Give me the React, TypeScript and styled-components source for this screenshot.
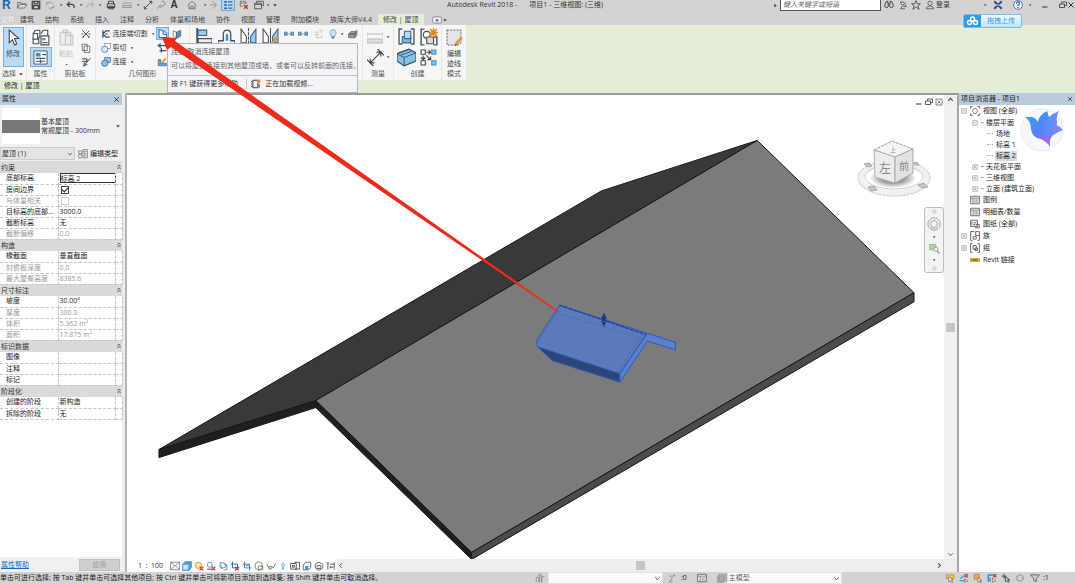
import React from "react";
import styled, { createGlobalStyle } from "styled-components";

const GlobalStyle = createGlobalStyle`
  * { box-sizing: border-box; }
  body {
    margin: 0;
    background: #d3d3d3;
    color: #333;
    font: 7px/10px "Open Sans", "Noto Sans CJK SC", sans-serif;
  }
  button, input, select {
    margin: 0;
    padding: 0;
    border: 0;
    background: none;
    color: inherit;
    font: inherit;
    border-radius: 0;
  }
  select { appearance: none; }
  svg { display: block; flex: none; }
`;

/* ---------- icons ---------- */

const blue = "#3f8fd0";
const ink = "#505050";
const pale = "#b9b9b9";

const glyphs: Record<string, React.ReactNode> = {
  folder: <path d="M1 13V4h5l1 2h6v2M1 13l3-6h12l-4 6z" stroke={ink} />,
  save: <path d="M2 2h12v12H2zM5 2v4h6V2M4 14V9h8v5" stroke="#444" strokeWidth="2" />,
  sync: <path d="M2 9a5 5 0 0 1 9-4l2 1M14 8a5 5 0 0 1-9 4M1 5h6M9 12h6" stroke="#8a8a8a" />,
  undo: <path d="M6 3L2 7l4 4M2 7h7q5 0 4 6" stroke="#444" strokeWidth="2" />,
  redo: <path d="M10 3l4 4-4 4M14 7H7q-5 0-4 6" stroke={pale} strokeWidth="2" />,
  print: <path d="M4 6V2h8v4M2 6h12v6H2zM4 10h8v4H4z" stroke="#444" strokeWidth="1.6" />,
  ruler: <path d="M1 5h14M1 9h14v3H1z" stroke="#777" />,
  dim: <path d="M2 14L14 2M2 10v4h4M10 2h4v4" stroke="#444" strokeWidth="1.5" />,
  tag: <path d="M9 2a4 4 0 1 1-2 6l-5 6M6 10l3 3" stroke="#777" strokeWidth="1.3" />,
  home: <path d="M1 8l7-6 7 6M3 7v7h10V7M6 14v-4h4v4" stroke={ink} />,
  diamond: <path d="M6 2l6 6-6 6M2 8h9" stroke="#888" strokeWidth="1.3" />,
  list: (
    <>
      <path d="M2 3h4M2 8h4M2 13h4" stroke="#17528c" strokeWidth="2.4" />
      <path d="M8 3h7M8 8h7M8 13h7" stroke="#17528c" strokeWidth="1.6" />
    </>
  ),
  closeHidden: (
    <>
      <path d="M2 10V2h9v4M2 5h9M2 10h4" stroke={ink} />
      <path d="M8 8l6 6M14 8l-6 6" stroke="#c33" strokeWidth="2.2" />
    </>
  ),
  windows: <path d="M4 5V2h11v7h-3M1 5h11v9H1zM1 7h11" stroke={ink} strokeWidth="1.4" />,
  caret: <path d="M3 6h10l-5 6z" fill="#444" />,
  playRight: <path d="M4 2l8 6-8 6z" fill="#444" />,
  binoculars: (
    <path d="M1 9a3 3 0 1 0 6 0L6 2H4zM9 9a3 3 0 1 0 6 0l-3-7h-2zM7 6h2" stroke="#444" strokeWidth="1.6" />
  ),
  satellite: <path d="M4 3q1 7 9 8M4 3q7-1 9 8M8 8l4-4M7 10l-3 4h7" stroke={ink} strokeWidth="1.4" />,
  star: <path d="M8 1l2 5h5l-4 3 2 6-5-4-5 4 2-6-4-3h5z" stroke="#444" strokeWidth="1.3" />,
  person: <path d="M8 2a3 3 0 0 1 1 6v2q5 0 5 4H2q0-4 5-4V8a3 3 0 0 1 1-6z" stroke="#555" strokeWidth="1.3" />,
  exchange: (
    <>
      <path d="M2 2l12 12M14 2L2 14" stroke="#35459b" strokeWidth="3" />
      <path d="M1 8h14" stroke="#d3d3d3" strokeWidth="1.4" />
    </>
  ),
  help: (
    <>
      <circle cx="8" cy="8" r="7" fill="#eef4fb" stroke="#51688c" strokeWidth="1.4" />
      <path d="M5.500 6q0-3 2.500-3t2.500 2.500q0 1.500-2.500 3v1M8 11v2" stroke="#2f5fae" strokeWidth="1.8" />
    </>
  ),
  minimize: <path d="M2 12h11" stroke="#333" strokeWidth="2" />,
  restore: <path d="M5 5V2h10v7h-3M1 6h10v7H1z" stroke="#333" strokeWidth="1.6" />,
  close: <path d="M3 3l10 10M13 3L3 13" stroke="#333" strokeWidth="2" />,
  closeBox: <path d="M2 2h12v12H2zM5 5l6 6M11 5l-6 6" stroke="#555" strokeWidth="1.4" />,
  cursor: <path d="M4 1v12l3-3 2 5 2-1-2-5h4z" fill="#fff" stroke="#444" />,
  props: (
    <>
      <path d="M1 5l2-3h4v6l-2 2H1zM8 5l2-3h4v5" fill="#fff" stroke={ink} />
      <path d="M1 10h5v4H1zM1 5h4v5M8 7h7v8H8z" fill="#fff" stroke={ink} />
      <path d="M9 9h3v2H9z" fill={blue} />
      <path d="M9 13h5" stroke={ink} />
    </>
  ),
  propPanel: (
    <>
      <path d="M1 1h14v14H1z" fill="#f7fafc" stroke="#44586b" />
      <path d="M3 3h5v4H3z" fill={blue} />
      <path d="M10 5h4M3 9h10M3 12h10M8 10v4" stroke="#44586b" strokeWidth="1.3" />
    </>
  ),
  paste: <path d="M2 3h10v12H2zM5 1h4v3H5zM7 6h7v9H7z" fill="#eee" stroke="#c4c4c4" />,
  cut: <path d="M3 3l10 10M13 3L3 13M2 2l3 3M1 8h3M12 8h3M2 13h3M11 13h3" stroke="#444" strokeWidth="1.5" />,
  copy: <path d="M2 2h8v10H2zM5 5h9v10H5z" fill="#fff" stroke={ink} strokeWidth="1.2" />,
  brush: (
    <>
      <path d="M2 3h7v4H2M9 5h2M15 2L8 10" stroke="#444" strokeWidth="1.6" />
      <path d="M4 15l1-6 5 3z" fill={blue} stroke={ink} />
    </>
  ),
  cope: <path d="M3 2v12M3 8l5-5h6M3 8l5 5h6M7 8h3" stroke="#3d5166" strokeWidth="2" />,
  geoCut: (
    <>
      <rect x="6" y="1" width="9" height="8" fill="#fff" stroke="#c05a66" />
      <circle cx="6" cy="10" r="5" fill="#dcecfa" stroke={blue} strokeWidth="1.5" />
    </>
  ),
  geoJoin: (
    <>
      <rect x="6" y="1" width="9" height="8" fill="#8fc3ec" stroke="#34658f" />
      <circle cx="6" cy="10" r="5" fill="#8fc3ec" stroke="#34658f" strokeWidth="1.3" />
    </>
  ),
  roofJoin: (
    <>
      <path d="M3 2l6 2v5l5 1v4H3z" fill="#fff" stroke="#2f6da8" strokeWidth="1.5" />
      <path d="M9 4l5 3v3" stroke="#2f6da8" />
    </>
  ),
  bookCube: (
    <>
      <path d="M2 3l5 2v9l-5-3z" fill="#fff" stroke={ink} />
      <path d="M7 5l7-3v9l-7 4z" fill="#5d91bd" stroke="#3d5166" />
    </>
  ),
  wallJoin: <path d="M4 4h11M6 1L2 4l4 3M4 12h11M7 8v7" stroke="#3d5166" strokeWidth="2" />,
  paint: (
    <>
      <path d="M2 14V4h4v6h9v4z" fill="#5ba0d8" stroke="#34658f" />
      <path d="M14 2L8 9" stroke="#e09334" strokeWidth="3" />
    </>
  ),
  align: (
    <>
      <path d="M2 0v16" stroke="#3d5166" strokeWidth="1.6" />
      <path d="M3 2h8v5H3z" fill="#9ccbee" stroke="#34658f" />
      <path d="M3 10h13v4H3z" fill="#eee" stroke={ink} />
    </>
  ),
  offset: (
    <>
      <path d="M0 12h5V6q0-4 3.500-4T12 6v6h4M0 12v3h16v-3" fill="#f4f4f4" stroke="#3d5166" strokeWidth="1.2" />
      <path d="M8 12V7q0-1 .500-1t.500 1v5" stroke={blue} strokeWidth="1.4" />
    </>
  ),
  mirror: (
    <>
      <path d="M8 0v16" stroke="#3d5166" strokeDasharray="3 1" />
      <path d="M1 1l5 7v6H1z" fill="#fff" stroke={ink} />
      <path d="M15 1l-5 7v6h5z" fill="#9ccbee" stroke="#34658f" />
    </>
  ),
  mirrorDraw: (
    <>
      <path d="M8 0v16" stroke="#3d5166" />
      <path d="M1 1l5 7v6H1z" fill="#fff" stroke={ink} />
      <path d="M15 1l-5 7v6h5z" fill="#9ccbee" stroke="#34658f" />
      <path d="M15 8l-6 7" stroke="#e09334" strokeWidth="2.400" />
    </>
  ),
  split: (
    <>
      <path d="M0 5h5v5H0zM11 5h5v5h-5z" fill="#6fa9d8" stroke="#34658f" />
      <path d="M5 8h6" stroke="#d05050" />
    </>
  ),
  unpin: <path d="M2 5h6v6M9 2h5v5M6 9v5h8v-4M2 9h4" stroke="#bdbdbd" strokeWidth="1.3" />,
  bulb: (
    <>
      <path d="M8 1a5 5 0 0 1 3 9v2H5v-2a5 5 0 0 1 3-9z" fill="#cfe5f7" stroke={blue} />
      <path d="M6 14h4" stroke={ink} strokeWidth="2" />
    </>
  ),
  override: (
    <>
      <path d="M1 8l4-4h9l-3 4zM1 8h10v6H1zM11 8l3-4v6l-3 4" fill="#999" stroke="#555" />
      <path d="M10 3l5-1v4z" fill="#d2653d" />
    </>
  ),
  measure: <path d="M0 3v5M16 3v5M1 5h14M0 10h16v4H0z" fill="#ddd" stroke={pale} />,
  dimension: <path d="M3 13L13 3M0 10l6 6M10 0l6 6M3 9v4h4M13 7V3H9" stroke="#444" strokeWidth="1.1" />,
  group: (
    <>
      <path d="M4 1H1v14h3M12 1h3v14h-3" stroke="#4b5a69" strokeWidth="1.3" />
      <path d="M4 8h8v6H4z" fill="#7bb8e6" stroke="#34658f" />
      <path d="M6 3h6v7H6z" fill="#b4d9f3" stroke="#34658f" />
    </>
  ),
  similar: (
    <>
      <path d="M4 1H1v14h3M12 8h3v7h-3" stroke="#4b5a69" strokeWidth="1.3" />
      <circle cx="6" cy="6" r="3" stroke={ink} fill="#fff" />
      <path d="M6 8h6v6H6z" fill="#ddd" stroke={ink} />
      <path d="M12 0v8M8 4h8M9 1l6 6M15 1L9 7" stroke="#e08a22" strokeWidth="1.3" />
    </>
  ),
  assembly: (
    <>
      <path d="M0 5l10-4 6 3v7l-10 4-6-4z" fill="#8cbfe6" stroke="#34556f" />
      <path d="M0 5l6 3 10-4M6 8v7M1 4l10-3M3 6l9-3" stroke="#34556f" strokeWidth="0.800" />
    </>
  ),
  parts: (
    <>
      <path d="M1 1h4v4H1zM1 11h4v4H1z" fill="#fff" stroke="#444" />
      <path d="M11 1h4v4h-4zM11 11h4v4h-4z" fill="#8cbfe6" stroke={blue} />
      <path d="M6 3h4M8 1l2 2-2 2M3 6v4M1 8l2 2 2-2M6 6l4 4M10 7v3H7" stroke="#444" />
    </>
  ),
  editSketch: (
    <>
      <path d="M1 1h13v12l-3 2H1z" fill="#e5e5e8" stroke="#777" strokeDasharray="2 1" />
      <path d="M15 8l-6 6" stroke="#dd9a45" strokeWidth="2.6" />
      <path d="M9 14l-1 2 3-1z" fill="#444" />
    </>
  ),
  tabBox: (
    <>
      <rect x="1" y="3" width="14" height="10" rx="2" fill="#eee" stroke="#666" />
      <path d="M5 10h6L8 6z" fill="#555" />
    </>
  ),
  editType: (
    <>
      <path d="M1 3h5v4H1zM1 9h5v5H1zM8 1h7v13H8z" fill="#fff" stroke={ink} />
      <path d="M9 4h5M9 7h5M9 10h5M11 2v11" stroke="#777" />
    </>
  ),
  chevronUp: <path d="M4 7l4-4 4 4M4 13l4-4 4 4" stroke="#222" strokeWidth="2" />,
  up: <path d="M3 11l5-6 5 6" stroke="#444" strokeWidth="2.400" />,
  down: <path d="M3 5l5 6 5-6" stroke="#555" strokeWidth="2" />,
  left: <path d="M11 3L6 8l5 5" stroke="#444" strokeWidth="2" />,
  right: <path d="M5 3l5 5-5 5" stroke="#444" strokeWidth="2.400" />,
  detail: <path d="M1 2h14v12H1zM1 2l7 6 7-6M1 14l6-6M15 14L9 8" stroke={ink} />,
  style: (
    <>
      <path d="M1 5l4-4h10v9l-4 5H1z" fill="#4aa0e2" stroke="#2a6da5" />
      <path d="M2 6h8v8H2z" fill="#c5e2f7" />
    </>
  ),
  sun: (
    <>
      <circle cx="7" cy="7" r="5" fill="#ffe9b0" stroke="#dc9a2d" strokeWidth="1.5" />
      <path d="M9 9l6 6M15 9l-6 6" stroke="#d03030" strokeWidth="2" />
    </>
  ),
  shadow: (
    <>
      <circle cx="6" cy="6" r="4" fill="#fff" stroke={blue} strokeWidth="1.4" />
      <path d="M2 13h8" stroke="#777" strokeWidth="2" />
      <path d="M9 9l6 6M15 9l-6 6" stroke="#d03030" strokeWidth="2" />
    </>
  ),
  render: <path d="M3 3h5a4 4 0 0 1 1 8H6zM9 6h5v8H9M2 7l4 6" stroke="#5d86ab" strokeWidth="1.4" />,
  crop: (
    <>
      <path d="M1 5h11v9M4 1v10h11" stroke="#2870ae" strokeWidth="1.6" />
      <path d="M8 9l6 6M14 9l-6 6" stroke="#d03030" strokeWidth="2" />
    </>
  ),
  cropView: <path d="M1 5h11v10M4 1v10h11M6 7h5" stroke="#4787bd" strokeWidth="1.6" />,
  lock: <path d="M2 4l5-3 6 3v7l-6 4-5-4zM7 8h7v6H7z" stroke="#55785b" strokeWidth="1.3" />,
  glasses: <path d="M1 5l3 5 4-2 4 3 3-7M5 10a2 2 0 1 0 3 0" stroke={ink} strokeWidth="1.3" />,
  smallBulb: <path d="M8 3a3 4 0 0 1 1 7v3H7v-3a3 4 0 0 1 1-7z" stroke={blue} fill="#dcecfa" />,
  camera: <path d="M1 4h9v9H1zM7 2h8v11H8M4 7h3v3H4z" stroke="#444" strokeWidth="1.4" />,
  layers: (
    <>
      <path d="M2 6l4-4h8v8l-3 4H2z" stroke={ink} strokeWidth="1.3" />
      <path d="M5 8h5v6H5z" fill={blue} />
    </>
  ),
  cube: <path d="M2 5l6-3 6 3v6l-6 4-6-4zM5 7h6v5H5z" stroke={ink} strokeWidth="1.3" />,
  constraint: <path d="M1 3h4M3 3v11M6 5h8M13 2v12M7 10h5M7 8v4" stroke="#555" strokeWidth="1.4" />,
  worksets: <path d="M2 15V7h4v8M7 15V4h3v11M11 15V6h4M5 4l3-3 3 3" stroke="#8a8a8a" strokeWidth="1.3" />,
  pencil: <path d="M3 14h6M5 13L11 3l3 2M4 5h4" stroke="#8a8a8a" strokeWidth="1.4" />,
  table: (
    <>
      <path d="M1 2h14v12H1z" fill="#f3f3f3" stroke="#555" strokeWidth="1.3" />
      <path d="M1 5h14M5 5v9M7 8h6M7 11h6" stroke="#555" />
    </>
  ),
  tableGray: <path d="M3 2h12v11H3zM1 5h9v10H1zM3 8h5M3 11h5M12 3v8" fill="#bbb" stroke="#888" />,
  pickStar: (
    <>
      <path d="M2 3h12v6H2z" fill="#f1c84b" stroke="#a97c1d" />
      <path d="M6 6v8l2-2 2 4 2-1-2-4h3z" fill="#fff" stroke="#555" />
    </>
  ),
  pickLink: (
    <>
      <path d="M1 12h9M2 9l6-5" stroke={blue} strokeWidth="2" />
      <path d="M9 2l5 5M14 2L9 7" stroke="#d03030" strokeWidth="2" />
      <path d="M9 9v6l2-2h3z" fill="#fff" stroke="#555" />
    </>
  ),
  pickFace: (
    <>
      <path d="M2 2h8v8H2z" fill="#f0a957" stroke="#b06a22" />
      <path d="M8 7v8l2-2 2 3 1-1-2-3h3z" fill="#fff" stroke="#555" />
    </>
  ),
  pickPin: (
    <>
      <path d="M2 14V3h8M5 14V7" stroke={blue} strokeWidth="2.400" />
      <path d="M10 2l5 5M15 2l-5 5" stroke="#d03030" strokeWidth="2" />
      <path d="M9 8v7l2-2h3z" fill="#fff" stroke="#555" />
    </>
  ),
  drag: <path d="M5 1v8M1 5h8M7 6v8l2-2 2 3 2-1-2-3h3z" stroke="#444" strokeWidth="1.4" />,
  ring: <circle cx="8" cy="8" r="5" stroke="#9b9b9b" strokeWidth="2.500" strokeDasharray="3 1" />,
  filter: <path d="M1 3h14l-5 6v5l-4-2V9z" fill="#c9ced3" stroke="#555" strokeWidth="1.3" />,
  plus: <path d="M2 2h12v12H2zM5 8h6M8 5v6" stroke="#666" strokeWidth="1.3" />,
  minus: <path d="M2 2h12v12H2zM5 8h6" stroke="#666" strokeWidth="1.3" />,
  views: (
    <>
      <path d="M1 4V1h3M12 1h3v3M1 12v3h3M12 15h3v-3" stroke="#444" strokeWidth="1.4" />
      <path d="M4 8l2-4h4l2 4-2 4H6z" stroke={ink} />
    </>
  ),
  sheets: <path d="M1 2h11v10H1zM3 9V5M6 6h4M9 9h6v5H8M5 9h3" fill="#eee" stroke="#555" strokeWidth="1.3" />,
  family: <path d="M7 1H1v14h3M12 15h3V1H9v6h6M5 9h5v4H5z" stroke="#555" strokeWidth="1.4" />,
  groups: <path d="M4 1H1v14h3M12 1h3v14h-3M5 4h5v6H5zM8 8h4v4H8z" stroke="#555" strokeWidth="1.4" />,
  link: (
    <>
      <path d="M0 5h16v6H0z" fill="#d9a32e" />
      <path d="M4 8h8" stroke="#7d5710" strokeWidth="2" />
    </>
  ),
  video: (
    <>
      <path d="M3 2h8v12H3zM1 3v2M1 7v2M1 11v2M13 8v6" stroke="#444" strokeWidth="1.6" />
      <path d="M10 1h5v5h-5z" fill="#e58b3c" />
    </>
  ),
  wheel: (
    <>
      <circle cx="8" cy="8" r="7" stroke="#999" />
      <circle cx="8" cy="8" r="4" stroke="#999" />
      <path d="M2 12h12l-2 2H4z" fill="#ccc" />
    </>
  ),
  zoomRegion: (
    <>
      <path d="M1 2h9v8H1z" fill="#b7cfae" stroke="#8aa882" />
      <circle cx="10" cy="9" r="3" fill="#f5f5f5" stroke="#888" />
      <path d="M12 11l3 4" stroke="#888" strokeWidth="1.600" />
    </>
  ),
  dot: <path d="M5 6h7l-3.500 5z" fill="#555" />,
};

const Icon = ({ name, size = 10 }: { name: string; size?: number }) => (
  <svg width={size} height={size} viewBox="0 0 16 16" fill="none" aria-hidden="true">
    {glyphs[name]}
  </svg>
);

/* ---------- frame ---------- */

const Shell = styled.div`
  position: relative;
  display: flex;
  flex-direction: column;
  min-height: 100vh;
  overflow: hidden;
`;

const TitleBar = styled.header`
  display: flex;
  align-items: center;
  height: 13px;
  padding-bottom: 3px;
  white-space: nowrap;
`;

const Strip = styled.div`
  display: flex;
  align-items: center;
  flex: none;
`;

const Slot = styled.button<{ $w: number; $on?: boolean }>`
  display: flex;
  align-items: center;
  justify-content: center;
  flex: none;
  width: ${(p) => p.$w}px;
  height: 12px;
  background: ${(p) => (p.$on ? "#b5d6f1" : "none")};
  box-shadow: ${(p) => (p.$on ? "inset 0 0 0 1px #6fa6d4" : "none")};
`;

const AppMark = styled.span`
  width: 14px;
  padding-left: 2px;
  color: #1f62a8;
  font-family: "Liberation Sans", sans-serif;
  font-size: 12px;
  font-weight: 700;
  line-height: 12px;
`;

const LetterA = styled.b`
  font-family: "Liberation Sans", sans-serif;
  font-size: 10px;
  line-height: 12px;
`;

const WindowTitle = styled.h1`
  display: flex;
  flex: 1;
  justify-content: center;
  gap: 12px;
  margin: 0;
  font: inherit;
`;

const SearchBox = styled.input`
  width: 101px;
  height: 11px;
  padding: 0 2px;
  background: #fff;
  border: 1px solid #555;
  border-top: 0;
  &::placeholder { color: #666; font-style: italic; opacity: 1; }
`;

const Login = styled.button`
  width: 46px;
  text-align: left;
`;

const TabBar = styled.nav`
  display: flex;
  align-items: flex-end;
  gap: 11px;
  height: 12px;
`;

const Tab = styled.button<{ $active?: boolean }>`
  height: 11px;
  padding: 0 ${(p) => (p.$active ? 5 : 0)}px;
  margin: 0 ${(p) => (p.$active ? -5 : 0)}px;
  line-height: 10px;
  white-space: nowrap;
  color: #444;
  background: ${(p) => (p.$active ? "#e4edd6" : "none")};
`;

const FileTab = styled(Tab)`
  margin-right: -6px;
  padding-left: 1px;
  color: #f1f1f1;
`;

const TabToggle = styled.button`
  display: flex;
  align-items: center;
  height: 11px;
  padding-left: 2px;
`;

const Upload = styled.button`
  position: absolute;
  top: 14px;
  right: 53px;
  z-index: 3;
  display: flex;
  align-items: center;
  width: 59px;
  height: 14px;
  border: 1px solid #74bdec;
  border-radius: 2px;
  overflow: hidden;
  background: linear-gradient(#eef9ff, #bfe5fb);
  color: #2f9fe8;
  span { flex: 1; }
`;

/* ---------- ribbon ---------- */

const Ribbon = styled.section`
  display: flex;
  height: 55px;
  background: #e4edd6;
`;

const Group = styled.div<{ $w: number }>`
  display: flex;
  flex-direction: column;
  flex: none;
  width: ${(p) => p.$w}px;
  background: #f5f6f5;
  border-right: 1px solid #e4ebdc;
`;

const GroupBody = styled.div`
  display: flex;
  justify-content: center;
  height: 43px;
  padding-top: 2px;
`;

const GroupLabel = styled.div`
  display: flex;
  align-items: center;
  justify-content: center;
  gap: 2px;
  height: 11px;
  color: #555;
`;

const BigButton = styled.button<{ $on?: boolean; $faded?: boolean }>`
  display: flex;
  flex-direction: column;
  align-items: center;
  gap: 3px;
  width: 21px;
  height: 40px;
  padding-top: 2px;
  color: ${(p) => (p.$faded ? "#c0c0c0" : "#444")};
  background: ${(p) => (p.$on ? "#b9dbf4" : "none")};
  box-shadow: ${(p) => (p.$on ? "inset 0 0 0 1px #79aedb" : "none")};
`;

const Column = styled.div`
  display: flex;
  flex-direction: column;
  gap: 1px;
`;

const Row = styled.div`
  display: flex;
`;

const IconButton = styled.button<{ $w: number; $h: number; $on?: boolean }>`
  display: flex;
  align-items: center;
  justify-content: center;
  width: ${(p) => p.$w}px;
  height: ${(p) => p.$h}px;
  background: ${(p) => (p.$on ? "#b9dbf4" : "none")};
  box-shadow: ${(p) => (p.$on ? "inset 0 0 0 1px #79aedb" : "none")};
`;

const TextCommand = styled.button`
  display: flex;
  align-items: center;
  gap: 2px;
  height: 13px;
  white-space: nowrap;
`;

const OptionsBar = styled.div`
  height: 13px;
  padding: 1px 4px;
  background: #e4edd6;
  color: #222;
`;

const Tooltip = styled.div`
  position: absolute;
  left: 167px;
  top: 43px;
  z-index: 2;
  width: 191px;
  background: #f4f4f6;
  border: 1px solid #b5b5bb;
  white-space: nowrap;
  color: #555;
  p { margin: 0; padding: 3px 3px 0; height: 14px; }
  p + p { height: 17px; color: #666; }
`;

const TooltipFoot = styled.div`
  display: flex;
  align-items: center;
  gap: 4px;
  height: 17px;
  padding: 0 3px;
  border-top: 1px solid #c4c4c8;
  color: #333;
  svg { box-sizing: content-box; margin-left: 4px; padding-left: 4px; border-left: 1px solid #c4c4c8; }
`;

const RedArrow = styled.svg`
  position: absolute;
  left: 0;
  top: 0;
  z-index: 4;
  pointer-events: none;
`;

/* ---------- properties ---------- */

const Workspace = styled.main`
  display: flex;
  flex: 1;
`;

const Properties = styled.aside`
  display: flex;
  flex-direction: column;
  flex: none;
  width: 127px;
  background: #fff;
  border-right: 2px solid #b4b4b4;
  box-shadow: inset -3px 0 #ececec;
`;

const PanelTitle = styled.h2`
  display: flex;
  align-items: center;
  justify-content: space-between;
  height: 12px;
  margin: 0;
  padding: 0 2px;
  font: inherit;
  color: #222;
  background: #b9cbdc;
`;

const PropTitle = styled(PanelTitle)`
  width: 122px;
`;

const TypePicker = styled.button`
  display: flex;
  align-items: center;
  gap: 1px;
  width: 122px;
  height: 41px;
  padding: 0 1px 0 2px;
  background: #f0f0f0;
  text-align: left;
  line-height: 9px;
  span { flex: 1; white-space: nowrap; }
`;

const Swatch = styled.i`
  width: 38px;
  height: 36px;
  background: linear-gradient(#fff 12px, #777 12px, #777 25px, #fff 25px);
`;

const FilterRow = styled.div`
  display: flex;
  align-items: center;
  width: 122px;
  height: 15px;
  background: #f0f0f0;
`;

const SelectWrap = styled.div<{ $w: number }>`
  position: relative;
  display: flex;
  align-items: center;
  width: ${(p) => p.$w}px;
  height: 13px;
  background: #e4e4e4;
  border: 1px solid #ccc;
  select { width: 100%; height: 100%; padding: 0 1px; outline: 0; }
  svg { position: absolute; right: 1px; pointer-events: none; }
`;

const EditType = styled.button`
  display: flex;
  align-items: center;
  gap: 2px;
  padding-left: 3px;
  white-space: nowrap;
  color: #222;
`;

const PropTable = styled.table`
  width: 122px;
  table-layout: fixed;
  border-collapse: collapse;
  th, td { padding: 0; text-align: left; font-weight: 400; white-space: nowrap; }
`;

const SectionRow = styled.tr`
  height: 12px;
  background: #dadada;
  th { padding-left: 1px; line-height: 11px; }
  svg { margin-left: 1px; }
`;

const ValueRow = styled.tr<{ $off?: boolean }>`
  height: 11px;
  color: ${(p) => (p.$off ? "#999" : "#222")};
  th, td { line-height: 10px; border-bottom: 1px dashed #c6c6c6; border-right: 1px dashed #c6c6c6; }
  th { padding-left: 6px; overflow: hidden; text-overflow: ellipsis; }
  td { padding-left: 1px; }
  input[type="text"] { display: block; width: 56px; height: 10px; border: 1px solid #333; background: #fff; line-height: 8px; }
  input[type="checkbox"] {
    appearance: none;
    display: block;
    width: 8px;
    height: 8px;
    margin-left: 1px;
    border: 1px solid ${(p) => (p.$off ? "#ccc" : "#444")};
  }
  input[type="checkbox"]:checked::after {
    content: "";
    display: block;
    width: 5px;
    height: 3px;
    border: solid #222;
    border-width: 0 0 1px 1px;
    transform: rotate(-45deg);
  }
`;

const PropFoot = styled.div`
  display: flex;
  align-items: center;
  justify-content: space-between;
  width: 122px;
  height: 15px;
  margin-top: auto;
  padding: 0 2px 0 1px;
  background: #f0f0f0;
  a { color: #0a6fc2; }
  button { width: 41px; height: 12px; background: #cfcfcf; color: #999; border: 1px solid #c2c2c2; line-height: 9px; }
`;

/* ---------- canvas ---------- */

const CanvasArea = styled.section`
  display: flex;
  flex-direction: column;
  flex: 1;
  min-width: 0;
`;

const Stage = styled.div`
  position: relative;
  display: flex;
  flex: 1;
  background: #fff;
  border-top: 2px solid #9a9a9a;
`;

const Scene = styled.svg`
  flex: 1 1 0;
  min-width: 0;
  height: auto;
`;

const VScroll = styled.div`
  display: flex;
  flex-direction: column;
  align-items: center;
  justify-content: space-between;
  width: 13px;
  padding: 1px 0;
  background: #f1f1f1;
`;

const Thumb = styled.i`
  width: 9px;
  height: 9px;
  background: #c6c6c6;
`;

const StageButtons = styled.div`
  position: absolute;
  top: 1px;
  right: 13px;
  display: flex;
`;

const CubeBox = styled.div`
  position: absolute;
  top: 43px;
  right: 25px;
`;

const NavBar = styled.div`
  position: absolute;
  top: 112px;
  right: 13px;
  display: flex;
  flex-direction: column;
  align-items: center;
  justify-content: space-between;
  width: 20px;
  height: 66px;
  background: #f3f3f3;
  border: 1px solid #bdbdbd;
  border-radius: 3px;
`;

const NavButton = styled.button<{ $h: number }>`
  display: flex;
  align-items: center;
  justify-content: center;
  width: 18px;
  height: ${(p) => p.$h}px;
`;

const ViewBar = styled.div`
  display: flex;
  align-items: center;
  height: 13px;
  background: #fff;
`;

const Scale = styled.button`
  width: 42px;
  padding-left: 11px;
  text-align: left;
  white-space: pre;
`;

const HScroll = styled.div`
  display: flex;
  align-items: center;
  justify-content: space-between;
  flex: 1;
  height: 13px;
  padding-right: 14px;
  background: #eee;
`;

/* ---------- browser ---------- */

const Browser = styled.aside`
  position: relative;
  flex: none;
  width: 118px;
  background: #fff;
  border-left: 2px solid #a5a5a5;
`;

const Tree = styled.ul`
  margin: 0;
  padding: 0 0 0 2px;
  list-style: none;
  color: #222;
`;

const Branch = styled.li<{ $level: number }>`
  display: flex;
  align-items: center;
  gap: 2px;
  height: ${(p) => (p.$level ? 11 : 12)}px;
  padding-left: ${(p) => [0, 11, 26][p.$level]}px;
  white-space: nowrap;
`;

const Twist = styled.span`
  display: flex;
  width: 7px;
`;

const Dash = styled.i<{ $w: number }>`
  width: ${(p) => p.$w}px;
  border-top: 1px dotted #aaa;
`;

const Leaf = styled.span<{ $sel?: boolean }>`
  padding: 0 1px;
  background: ${(p) => (p.$sel ? "#d9d9d9" : "none")};
`;

const BirdBox = styled.div`
  position: absolute;
  top: 15px;
  right: 11px;
`;

/* ---------- status ---------- */

const Status = styled.footer`
  display: flex;
  align-items: center;
  height: 12px;
  color: #222;
  white-space: nowrap;
`;

const Hint = styled.span`
  flex: none;
  width: 532px;
`;

const StatusSelect = styled(SelectWrap)`
  height: 12px;
  background: #fafafa;
  border-color: #e2e2e2;
  color: #666;
`;

const Spacer = styled.i`
  flex: 1;
`;

const Count = styled.span`
  width: 32px;
`;

/* ---------- data ---------- */

type Tool = [icon: string, width: number, label: string, on?: boolean];

const quick: Tool[] = [
  ["folder", 16, "打开"], ["save", 12, "保存"], ["sync", 15, "同步"], ["dot", 7, "同步选项"],
  ["undo", 14, "放弃"], ["dot", 5, "放弃列表"], ["redo", 14, "重做"], ["dot", 6, "重做列表"],
  ["print", 16, "打印"], ["ruler", 16, "测量"], ["dot", 6, "测量选项"], ["dim", 14, "对齐标注"],
  ["tag", 12, "标记"], ["letter", 14, "文字"], ["home", 22, "默认三维视图"], ["dot", 4, "三维选项"],
  ["diamond", 14, "剖面"], ["list", 14, "细线", true], ["closeHidden", 18, "关闭隐藏窗口"],
  ["windows", 12, "切换窗口"], ["dot", 5, "窗口列表"], ["caret", 10, "自定义"],
];

const tabs = ["建筑", "结构", "系统", "插入", "注释", "分析", "体量和场地", "协作", "视图", "管理", "附加模块", "族库大师V4.4"];

type Prop = { name: string; value?: string; off?: boolean; kind?: "text" | "check" | "checked" };

const sections: { title: string; rows: Prop[] }[] = [
  {
    title: "约束",
    rows: [
      { name: "底部标高", value: "标高 2", kind: "text" },
      { name: "房间边界", kind: "checked" },
      { name: "与体量相关", kind: "check", off: true },
      { name: "目标高的底部...", value: "3000.0" },
      { name: "截断标高", value: "无" },
      { name: "截断偏移", value: "0.0", off: true },
    ],
  },
  {
    title: "构造",
    rows: [
      { name: "椽截面", value: "垂直截面" },
      { name: "封檐板深度", value: "0.0", off: true },
      { name: "最大屋脊高度", value: "8385.6", off: true },
    ],
  },
  {
    title: "尺寸标注",
    rows: [
      { name: "坡度", value: "30.00°" },
      { name: "厚度", value: "300.0", off: true },
      { name: "体积", value: "5.362 m³", off: true },
      { name: "面积", value: "17.875 m²", off: true },
    ],
  },
  { title: "标识数据", rows: [{ name: "图像" }, { name: "注释" }, { name: "标记" }] },
  {
    title: "阶段化",
    rows: [
      { name: "创建的阶段", value: "新构造" },
      { name: "拆除的阶段", value: "无" },
    ],
  },
];

const tree: { level: number; text: string; twist?: string; icon?: string; sel?: boolean }[] = [
  { level: 0, text: "视图 (全部)", twist: "minus", icon: "views" },
  { level: 1, text: "楼层平面", twist: "minus" },
  { level: 2, text: "场地" },
  { level: 2, text: "标高 1" },
  { level: 2, text: "标高 2", sel: true },
  { level: 1, text: "天花板平面", twist: "plus" },
  { level: 1, text: "三维视图", twist: "plus" },
  { level: 1, text: "立面 (建筑立面)", twist: "plus" },
  { level: 0, text: "图例", icon: "table" },
  { level: 0, text: "明细表/数量", icon: "table" },
  { level: 0, text: "图纸 (全部)", icon: "sheets" },
  { level: 0, text: "族", twist: "plus", icon: "family" },
  { level: 0, text: "组", twist: "plus", icon: "groups" },
  { level: 0, text: "Revit 链接", icon: "link" },
];

const viewTools = ["detail", "style", "sun", "shadow", "render", "crop", "cropView", "lock", "glasses", "smallBulb", "camera", "layers", "cube", "constraint"];

const pickTools = ["pickStar", "pickLink", "pickFace", "pickPin", "drag", "ring"];

/* ---------- pieces ---------- */

const Tools = ({ items, size = 10 }: { items: Tool[]; size?: number }) => (
  <>
    {items.map(([icon, w, label, on], i) => (
      <Slot key={i} $w={w} $on={on} aria-label={label}>
        {icon === "letter" ? <LetterA>A</LetterA> : <Icon name={icon} size={icon === "dot" || icon === "caret" ? 6 : size} />}
      </Slot>
    ))}
  </>
);

const PropInput = ({ row }: { row: Prop }) => {
  if (row.kind === "text") return <input type="text" aria-label={row.name} defaultValue={row.value} />;
  if (row.kind) return <input type="checkbox" aria-label={row.name} defaultChecked={row.kind === "checked"} disabled={row.off} />;
  return <>{row.value}</>;
};

const Roof = () => (
  <Scene viewBox="127 95 818 465" preserveAspectRatio="xMidYMid meet" aria-label="三维屋顶模型">
    <g stroke="#161616" strokeWidth="1" strokeLinejoin="round">
      <path d="M159 450L602 191L758 140.500L316 401z" fill="#393939" />
      <path d="M159 450L316 401V408L159 458z" fill="#1f1f1f" />
      <path d="M316 401L758 140.500L915 293L472 553z" fill="#7b7b7b" />
      <path d="M316 401L472 553V560L316 408z" fill="#1f1f1f" />
      <path d="M472 553L915 293V302L472 560z" fill="#4b4b4b" />
    </g>
    <g stroke="#2f58b6" strokeWidth="1" strokeLinejoin="round">
      <path d="M538 347L620.500 374V382.500L553 361z" fill="#2c4579" />
      <path d="M560 305.500L537 341L538 347L620.500 374L647 335z" fill="#5a7abb" />
      <path d="M647 335L560 305.500L676 342.500V350L648 341.500L620.500 382.500V374z" fill="#5b80d0" />
      <path d="M560 305.500L647 335" stroke="#173a8f" strokeDasharray="3 2" />
    </g>
    <path d="M557 313L646 340M557 313L539 342M642 337L618 373" stroke="#4c70bd" fill="none" />
    <path d="M604.500 313l3 6h-6zM604.500 327l3-6h-6zM603 319h3v3h-3z" fill="#1c3a80" />
  </Scene>
);

const ViewCube = () => (
  <svg width="76" height="60" viewBox="857 138 76 60" fill="none" aria-label="视图方位">
    <defs>
      <radialGradient id="cubeShade">
        <stop offset="0.500" stopColor="#999" />
        <stop offset="1" stopColor="#fff" />
      </radialGradient>
    </defs>
    <ellipse cx="895" cy="178" rx="33" ry="15" stroke="#f0f0f0" strokeWidth="6" />
    <ellipse cx="895" cy="178" rx="36" ry="18" stroke="#c4c4c4" strokeDasharray="3 1" />
    <ellipse cx="895" cy="177" rx="29" ry="12" stroke="#c9c9c9" />
    <ellipse cx="894" cy="178" rx="23" ry="10" fill="url(#cubeShade)" />
    <path d="M875 150l18-9 21 8-18 8z" fill="#f5f5f5" stroke="#999" strokeDasharray="3 1" />
    <path d="M875 150l21 7v26l-20-6z" fill="#ececec" stroke="#b0b0b0" />
    <path d="M896 157l18-8v24l-18 10z" fill="#e2e2e2" stroke="#a8a8a8" />
    <g fill="#888" fontFamily="Noto Sans CJK SC, sans-serif">
      <text x="880" y="173" fontSize="12">左</text>
      <text x="900" y="170" fontSize="10">前</text>
      <text x="891" y="152" fontSize="6">上</text>
    </g>
    <path d="M869 187l6-1 3 4-6 1zM919 185l6-2 4 4-6 1zM865 164l5-1 3 3-5 1zM914 163l4-1 2 3h-4z" fill="#c4c4c4" stroke="#aaa" />
  </svg>
);

const Bird = () => (
  <svg width="44" height="44" viewBox="0 0 44 44" aria-label="蜂鸟">
    <defs>
      <linearGradient id="body" x1="0" y1="0" x2="0.700" y2="1">
        <stop offset="0" stopColor="#35a6fb" />
        <stop offset="0.600" stopColor="#5580f6" />
        <stop offset="1" stopColor="#c060ec" />
      </linearGradient>
      <linearGradient id="wing" x1="0" y1="0" x2="1" y2="0">
        <stop offset="0" stopColor="#4a8efa" />
        <stop offset="1" stopColor="#8a86f7" />
      </linearGradient>
    </defs>
    <circle cx="22" cy="22" r="21" fill="#f6f8fd" stroke="#e9ecf5" />
    <path
      d="M5 9L12 9Q16 10 18 14Q19 7 27 3L29 9L37 14Q36 23 33 27Q29 30 30 39Q27 34 21 31Q12 30 11 21Q11 13 5 9z"
      fill="url(#body)"
    />
    <path d="M22 22Q25 8 39 3Q36 8 37 14L36 17Q40 18 43 22Q38 24 33 27Q24 30 22 22z" fill="url(#wing)" />
  </svg>
);

export default function App() {
  return (
    <Shell lang="zh-CN">
      <GlobalStyle />
      <TitleBar>
        <Strip>
          <AppMark>R</AppMark>
          <Tools items={quick} />
        </Strip>
        <WindowTitle>
          <span>Autodesk Revit 2018 -</span>
          <span>项目1 - 三维视图: (三维)</span>
        </WindowTitle>
        <Strip>
          <Tools items={[["playRight", 10, "展开搜索"]]} size={5} />
          <SearchBox aria-label="搜索" placeholder="键入关键字或短语" />
          <Tools items={[["binoculars", 16, "搜索"], ["satellite", 11, "通讯中心"], ["star", 15, "收藏夹"], ["person", 13, "帐户"]]} />
          <Login>登录</Login>
          <Tools items={[["dot", 6, "登录选项"], ["exchange", 20, "应用商店"], ["help", 20, "帮助"], ["dot", 4, "帮助选项"]]} />
          <Tools items={[["minimize", 26, "最小化"], ["restore", 9, "还原"], ["close", 8, "关闭"]]} size={8} />
        </Strip>
      </TitleBar>
      <TabBar>
        <FileTab>文件</FileTab>
        {tabs.map((t) => (
          <Tab key={t}>{t}</Tab>
        ))}
        <Tab $active>修改 | 屋顶</Tab>
        <TabToggle aria-label="折叠功能区">
          <Icon name="tabBox" size={10} />
          <Icon name="caret" size={6} />
        </TabToggle>
      </TabBar>
      <Upload>
        <svg width="17" height="14" viewBox="0 0 17 14" fill="none">
          <path d="M0 0h17v14H0z" fill="#2d9bec" />
          <g stroke="#fff" strokeWidth="1.500">
            <circle cx="8.500" cy="5" r="2" />
            <circle cx="5.500" cy="8.500" r="2" />
            <circle cx="11.500" cy="8.500" r="2" />
          </g>
        </svg>
        <span>拖拽上传</span>
      </Upload>

      <Ribbon>
        <Group $w={27}>
          <GroupBody>
            <BigButton $on>
              <Icon name="cursor" size={17} />
              修改
            </BigButton>
          </GroupBody>
          <GroupLabel>选择<Icon name="caret" size={6} /></GroupLabel>
        </Group>
        <Group $w={28}>
          <GroupBody>
            <Column>
              <IconButton $w={22} $h={19} aria-label="类型属性"><Icon name="props" size={18} /></IconButton>
              <IconButton $w={22} $h={20} $on aria-label="属性"><Icon name="propPanel" size={15} /></IconButton>
            </Column>
          </GroupBody>
          <GroupLabel>属性</GroupLabel>
        </Group>
        <Group $w={41}>
          <GroupBody>
            <BigButton $faded>
              <Icon name="paste" size={17} />
              粘贴
              <Icon name="dot" size={5} />
            </BigButton>
            <Column>
              <IconButton $w={18} $h={13} aria-label="剪切"><Icon name="cut" /></IconButton>
              <IconButton $w={18} $h={13} aria-label="复制"><Icon name="copy" /></IconButton>
              <IconButton $w={18} $h={13} aria-label="匹配类型"><Icon name="brush" /></IconButton>
            </Column>
          </GroupBody>
          <GroupLabel>剪贴板</GroupLabel>
        </Group>
        <Group $w={94}>
          <GroupBody>
            <Column>
              <TextCommand><Icon name="cope" />连接端切割<Icon name="dot" size={6} /></TextCommand>
              <TextCommand><Icon name="geoCut" />剪切 <Icon name="dot" size={6} /></TextCommand>
              <TextCommand><Icon name="geoJoin" />连接 <Icon name="dot" size={6} /></TextCommand>
            </Column>
            <Column>
              <IconButton $w={13} $h={13} $on aria-label="连接/取消连接屋顶"><Icon name="roofJoin" size={11} /></IconButton>
              <IconButton $w={13} $h={13} aria-label="墙连接"><Icon name="wallJoin" /></IconButton>
              <IconButton $w={13} $h={13} aria-label="填色"><Icon name="paint" /></IconButton>
            </Column>
            <IconButton $w={16} $h={13} aria-label="拆分面"><Icon name="bookCube" /></IconButton>
          </GroupBody>
          <GroupLabel>几何图形</GroupLabel>
        </Group>
        <Group $w={173}>
          <GroupBody>
            <IconButton $w={24} $h={18} aria-label="对齐"><Icon name="align" size={17} /></IconButton>
            <IconButton $w={22} $h={18} aria-label="偏移"><Icon name="offset" size={17} /></IconButton>
            <IconButton $w={22} $h={18} aria-label="镜像"><Icon name="mirror" size={17} /></IconButton>
            <IconButton $w={22} $h={18} aria-label="镜像 - 绘制轴"><Icon name="mirrorDraw" size={17} /></IconButton>
            <IconButton $w={16} $h={13} aria-label="拆分图元"><Icon name="split" /></IconButton>
            <IconButton $w={12} $h={13} aria-label="用间隙拆分"><Icon name="split" /></IconButton>
            <IconButton $w={18} $h={13} aria-label="解锁"><Icon name="unpin" /></IconButton>
            <IconButton $w={12} $h={13} aria-label="隐藏"><Icon name="bulb" /></IconButton>
            <IconButton $w={6} $h={13} aria-label="隐藏选项"><Icon name="dot" size={6} /></IconButton>
            <IconButton $w={16} $h={13} aria-label="替换"><Icon name="override" /></IconButton>
          </GroupBody>
          <GroupLabel>修改</GroupLabel>
        </Group>
        <Group $w={31}>
          <GroupBody>
            <Column>
              <Row>
                <IconButton $w={20} $h={19} aria-label="测量"><Icon name="measure" size={16} /></IconButton>
                <IconButton $w={6} $h={19} aria-label="测量选项"><Icon name="dot" size={6} /></IconButton>
              </Row>
              <Row>
                <IconButton $w={20} $h={20} aria-label="尺寸标注"><Icon name="dimension" size={17} /></IconButton>
                <IconButton $w={6} $h={20} aria-label="标注选项"><Icon name="dot" size={6} /></IconButton>
              </Row>
            </Column>
          </GroupBody>
          <GroupLabel>测量</GroupLabel>
        </Group>
        <Group $w={48}>
          <GroupBody>
            <Column>
              <Row>
                <IconButton $w={22} $h={19} aria-label="创建组"><Icon name="group" size={17} /></IconButton>
                <IconButton $w={22} $h={19} aria-label="创建类似"><Icon name="similar" size={18} /></IconButton>
              </Row>
              <Row>
                <IconButton $w={22} $h={20} aria-label="创建部件"><Icon name="assembly" size={19} /></IconButton>
                <IconButton $w={22} $h={20} aria-label="创建零件"><Icon name="parts" size={17} /></IconButton>
              </Row>
            </Column>
          </GroupBody>
          <GroupLabel>创建</GroupLabel>
        </Group>
        <Group $w={25}>
          <GroupBody>
            <BigButton>
              <Icon name="editSketch" size={17} />
              <span>编辑<br />迹线</span>
            </BigButton>
          </GroupBody>
          <GroupLabel>模式</GroupLabel>
        </Group>
      </Ribbon>
      <OptionsBar>修改 | 屋顶</OptionsBar>

      <Tooltip role="tooltip">
        <p>连接/取消连接屋顶</p>
        <p>可以将屋顶连接到其他屋顶或墙，或者可以反转前面的连接。</p>
        <TooltipFoot>
          <span>按 F1 键获得更多帮助</span>
          <Icon name="video" size={10} />
          <span>正在加载视频...</span>
        </TooltipFoot>
      </Tooltip>

      <Workspace>
        <Properties>
          <PropTitle>属性<Icon name="close" size={7} /></PropTitle>
          <TypePicker>
            <Swatch />
            <span>基本屋顶<br />常规屋顶 - 300mm</span>
            <Icon name="caret" size={6} />
          </TypePicker>
          <FilterRow>
            <SelectWrap $w={75}>
              <select aria-label="图元筛选"><option>屋顶 (1)</option></select>
              <Icon name="down" size={6} />
            </SelectWrap>
            <EditType><Icon name="editType" />编辑类型</EditType>
          </FilterRow>
          <PropTable>
            <colgroup>
              <col width="58" />
              <col width="57" />
              <col width="7" />
            </colgroup>
            {sections.map((s) => (
              <tbody key={s.title}>
                <SectionRow>
                  <th colSpan={2}>{s.title}</th>
                  <td><Icon name="chevronUp" size={6} /></td>
                </SectionRow>
                {s.rows.map((r) => (
                  <ValueRow key={r.name} $off={r.off}>
                    <th>{r.name}</th>
                    <td><PropInput row={r} /></td>
                    <td />
                  </ValueRow>
                ))}
              </tbody>
            ))}
          </PropTable>
          <PropFoot>
            <a href="#help">属性帮助</a>
            <button disabled>应用</button>
          </PropFoot>
        </Properties>

        <CanvasArea>
          <Stage>
            <Roof />
            <VScroll>
              <Icon name="up" size={7} />
              <Thumb />
              <Icon name="down" size={7} />
            </VScroll>
            <StageButtons>
              <Tools items={[["minimize", 10, "最小化视图"], ["restore", 10, "还原视图"], ["closeBox", 10, "关闭视图"]]} size={8} />
            </StageButtons>
            <CubeBox><ViewCube /></CubeBox>
            <NavBar>
              <NavButton $h={7} aria-label="关闭导航栏"><Icon name="ring" size={5} /></NavButton>
              <NavButton $h={16} aria-label="控制盘"><Icon name="wheel" size={14} /></NavButton>
              <NavButton $h={7} aria-label="控制盘选项"><Icon name="dot" size={6} /></NavButton>
              <NavButton $h={13} aria-label="区域放大"><Icon name="zoomRegion" size={11} /></NavButton>
              <NavButton $h={7} aria-label="缩放选项"><Icon name="dot" size={6} /></NavButton>
              <NavButton $h={7} aria-label="导航栏选项"><Icon name="ring" size={5} /></NavButton>
            </NavBar>
          </Stage>
          <ViewBar>
            <Scale>{"1  :  100"}</Scale>
            <Tools items={viewTools.map((n): Tool => [n, 12, n])} />
            <HScroll>
              <Icon name="left" size={7} />
              <Thumb />
              <Icon name="right" size={7} />
            </HScroll>
          </ViewBar>
        </CanvasArea>

        <Browser>
          <PanelTitle>项目浏览器 - 项目1<Icon name="close" size={6} /></PanelTitle>
          <Tree>
            {tree.map((n) => (
              <Branch key={n.text} $level={n.level}>
                {n.level < 2 && <Twist>{n.twist && <Icon name={n.twist} size={6} />}</Twist>}
                {n.level > 0 && <Dash $w={n.level === 1 ? 2 : 6} />}
                {n.icon && <Icon name={n.icon} />}
                <Leaf $sel={n.sel}>{n.text}</Leaf>
              </Branch>
            ))}
          </Tree>
          <BirdBox><Bird /></BirdBox>
        </Browser>
      </Workspace>

      <Status>
        <Hint>单击可进行选择; 按 Tab 键并单击可选择其他项目; 按 Ctrl 键并单击可将新项目添加到选择集; 按 Shift 键并单击可取消选择。</Hint>
        <Tools items={[["worksets", 16, "工作集"]]} />
        <StatusSelect $w={115}>
          <select aria-label="工作集"><option> </option></select>
          <Icon name="down" size={7} />
        </StatusSelect>
        <Tools items={[["pencil", 18, "可编辑"]]} />
        <span>:0</span>
        <Tools items={[["table", 30, "设计选项"], ["tableGray", 10, "添加到集"]]} />
        <StatusSelect $w={115}>
          <select aria-label="设计选项"><option>主模型</option></select>
          <Icon name="down" size={7} />
        </StatusSelect>
        <Spacer />
        <Tools items={pickTools.map((n): Tool => [n, 14, n])} />
        <Tools items={[["filter", 16, "过滤器"]]} />
        <Count>:1</Count>
      </Status>

      <RedArrow width="562" height="316" viewBox="0 0 562 316">
        <path d="M162 37L177 38L175 41L559 311.500L558 312.500L171 47L167 50z" fill="#ee2a1c" />
      </RedArrow>
    </Shell>
  );
}
